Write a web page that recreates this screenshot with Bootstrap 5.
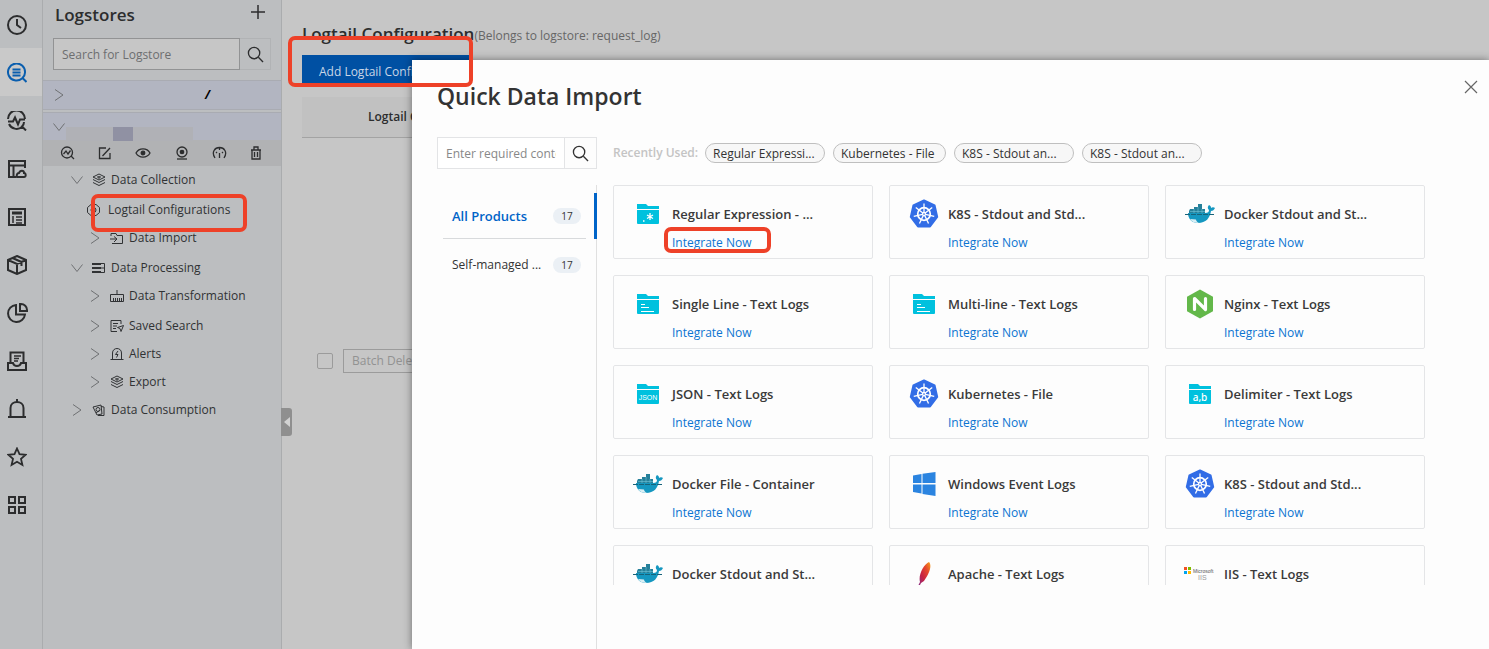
<!DOCTYPE html>
<html lang="en">
<head>
<meta charset="utf-8">
<meta name="viewport" content="width=device-width, initial-scale=1">
<title>Logstores - Quick Data Import</title>
<link href="https://cdn.jsdelivr.net/npm/bootstrap@5.3.0/dist/css/bootstrap.min.css" rel="stylesheet">
<style>
  :root { --ink:#2c2d2e; --line:#aaacae; --mark:#ee4128; --blue:#0064c8; }
  body { font-family:"Open Sans","Noto Sans",sans-serif; font-size:12px; line-height:16px; color:var(--ink); background:#c6c6c6; }
  a { text-decoration:none; color:inherit; }
  svg { display:block; flex:none; }
  .ico { fill:none; stroke:currentColor; stroke-width:2; }
  .fine { stroke-width:1; }
  .mark-box { position:absolute; border:4px solid var(--mark); border-radius:7px; z-index:30; pointer-events:none; }
  /* icon rail */
  .rail { width:43px; background:#bcbec0; border-right:1px solid var(--line); }
  .rail a { height:48px; padding:1px 0 0 7px; display:flex; align-items:center; }
  .rail a.active { background:#c9c9c9; color:#0a5eae; }
  /* logstore tree */
  .stores { width:239px; background:#bcbec0; border-right:1px solid var(--line); }
  .stores h1 { font-size:17px; line-height:24px; font-weight:600; }
  .stores-head { padding:3px 16px 0 12px; }
  .stores-find { padding:11px 10px 10px; }
  .plain { border:0; background:none; padding:0; color:inherit; }
  .field, .field:focus { font-size:12px; line-height:16px; border-radius:0; box-shadow:none; padding:0 8px; min-height:0; }
  .stores .field { height:32px; background:#c6c6c6; border-color:#929394; }
  .stores .field::placeholder { color:#6d6e70; }
  .stores .find { width:31px; border:1px solid #b1b3b5; border-left:0; }
  .store { background:#b2b5c1; border:1px solid #a9abb2; border-width:1px 0; height:30px; padding-left:10px; gap:1px; color:#6f7173; }
  .store.open { margin-top:2px; border-bottom:0; height:28px; }
  .veil { width:134px; height:28px; }
  .veil i { height:14px; width:20px; background:#b0b1b6; }
  .veil i.edge { width:7px; }
  .veil i.deep { background:#9091a3; }
  .tools { background:#b1b2b4; height:26px; padding:0 19px 0 17px; }
  .tree-row { height:28px; display:flex; align-items:center; gap:5px; color:#303234; }
  .tree-row .chev { color:#6f7173; }
  .tree-row .kind { margin-left:4px; }
  .lvl1 { padding-left:28px; }
  .lvl2 { padding-left:46px; }
  .step { margin-top:2px; }
  .leaf { padding-left:44px; position:relative; gap:8px; }
  .leaf .mark-box { left:48px; top:-2px; width:156px; height:38px; }
  .fold { position:absolute; left:100%; top:408px; width:11px; height:28px; background:#8f8f8f; color:#d2d2d2; border-radius:0 3px 3px 0; display:flex; align-items:center; justify-content:center; }
  /* page behind the drawer */
  .page { padding:22px 20px 0; }
  .page h2 { font-size:17px; line-height:24px; font-weight:600; }
  .add-btn { background:#0050a3; color:#c9d6e6; border:0; border-radius:0; width:168px; height:32px; font-size:12px; padding:1px 0 0 17px; text-align:left; }
  .add-wrap { position:relative; width:168px; margin-top:9px; }
  .add-wrap .mark-box { left:-14px; top:-19px; width:185px; height:51px; }
  .conf { width:100%; margin-top:10px; }
  .conf th { background:#c1c1c1; height:40px; border-bottom:1px solid #a3a3a3; font-weight:600; padding-left:66px; }
  .batch { margin-top:211px; padding-left:15px; gap:10px; }
  .batch .form-check-input { width:16px; height:16px; border-radius:2px; margin:0; background-color:transparent; border-color:#9b9b9b; }
  .batch .btn { font-size:12px; line-height:16px; border:1px solid #9b9b9b; border-radius:0; color:#929292; padding:3px 8px; opacity:1; }
  /* drawer */
  .drawer { position:absolute; top:60px; right:0; bottom:0; left:412px; background:#fdfdfd; color:#333; padding:0 64px 0 25px; box-shadow:0 0 8px rgba(0,0,0,.45); z-index:10; }
  .drawer h2 { font-size:23px; line-height:32px; font-weight:600; padding-top:20px; margin-bottom:25px; }
  .close-x { position:absolute; top:20px; right:11px; color:#666; }
  .seek { width:160px; }
  .seek .field { height:32px; border-color:#e3e4e6; background:#fff; color:#888; }
  .seek .field::placeholder { color:#888; }
  .seek .find { width:32px; border:1px solid #e3e4e6; border-left:0; }
  .recent { color:#c4c4c4; font-weight:600; width:84px; white-space:nowrap; }
  .pill { height:20px; border:1px solid #bfbfbf; border-radius:10px; background:#f7f7f7; padding:2px 7px; width:120px; white-space:nowrap; overflow:hidden; color:#333; line-height:16px; }
  .pill.short { width:113px; }
  .kinds { width:160px; border-right:1px solid #e0e0e0; padding-top:8px; }
  .kinds a { position:relative; height:46px; padding-right:15px; padding-left:15px; display:flex; align-items:center; justify-content:space-between; }
  .kinds a.on { font-size:13px; font-weight:600; color:var(--blue); margin-right:-1px; border-right:3px solid var(--blue); padding-right:13px; }
  .kinds hr { margin:-1px 10px 3px 6px; border-color:#d8dadc; opacity:1; }
  .count { width:28px; height:16px; border-radius:8px; background:#ebf0f5; color:#333; font-size:10px; font-weight:500; text-align:center; }
  .tiles { display:grid; grid-template-columns:repeat(3,minmax(0,1fr)); grid-auto-rows:74px; gap:16px; overflow:hidden; margin-bottom:64px; }
  .tile { border:1px solid #e4e5e7; border-radius:2px; padding:18px 12px 0 10px; display:flex; }
  .logo { width:48px; height:20px; display:flex; align-items:center; justify-content:center; flex:none; }
  .tile h3 { font-size:13px; line-height:20px; font-weight:600; margin-bottom:11px; white-space:nowrap; color:#3a3a3a; }
  .tile a { color:#0b74d1; position:relative; display:inline-block; }
  .tile .mark-box { left:-8px; top:-8px; width:107px; height:26px; }
</style>
</head>
<body>
<svg width="0" height="0" class="position-absolute" aria-hidden="true">
  <symbol id="right" viewBox="0 0 12 14"><path class="ico fine" d="M2 1.500l8 5.500-8 5.500"/></symbol>
  <symbol id="down" viewBox="0 0 12 14"><path class="ico fine" d="M.5 3.500L6 10.500l5.500-7"/></symbol>
  <symbol id="glass" viewBox="0 0 18 18"><circle class="ico" style="stroke-width:1.4" cx="7.500" cy="7.500" r="6"/><path class="ico" style="stroke-width:1.4" d="M12 12l5 5"/></symbol>
  <symbol id="folder" viewBox="0 0 24 22"><path fill="#00c1de" d="M1 1h9l2 2h11v3H1zM1 7h22v13a1 1 0 0 1-1 1H2a1 1 0 0 1-1-1z"/></symbol>
  <symbol id="lines" viewBox="0 0 24 22"><use href="#folder"/><path stroke="#fff" fill="none" d="M5 11.500h4M5 14.500h8M5 18.500h13"/></symbol>
  <symbol id="k8s" viewBox="0 0 30 30">
    <path fill="#326de6" stroke="#326de6" stroke-width="2" stroke-linejoin="round" d="M15 1.500L25.600 6.500 28.200 18 21 27.500H9L1.800 18 4.400 6.500z"/>
    <g fill="none" stroke="#fff" stroke-width="1.300"><circle cx="15" cy="15" r="6.300" stroke-width="1.700"/><circle cx="15" cy="15" r="1.500"/>
    <path d="M15 13.500V4.500"/><path d="M15 13.500V4.500" transform="rotate(51.400 15 15)"/><path d="M15 13.500V4.500" transform="rotate(102.900 15 15)"/><path d="M15 13.500V4.500" transform="rotate(154.300 15 15)"/><path d="M15 13.500V4.500" transform="rotate(205.700 15 15)"/><path d="M15 13.500V4.500" transform="rotate(257.100 15 15)"/><path d="M15 13.500V4.500" transform="rotate(308.600 15 15)"/></g>
  </symbol>
  <symbol id="docker" viewBox="0 0 32 22">
    <path fill="#25809a" d="M6 6h4V4h4V1h4v5h3v5H5V8z"/><path stroke="#6fc3d8" stroke-width=".6" d="M10 6v5M14 4v7M18 6v5M6 8.500h15"/>
    <path fill="#1597c0" d="M4 10h17c3 0 4-1 4-3-2-2-1-4 0-5 2 1 2 2 2 3 1-1 3-1 4 0-1 2-2 3-4 3-1 7-5 12-13 12C8 20 4 16 4 10z"/>
    <path stroke="#17637a" d="M1 11.500h29" stroke-dasharray="5 1"/><path fill="#d9eff5" d="M6 16l6 .5c0 2 2 3 3 3.500-4 0-7-1-9-4z"/>
  </symbol>
  <symbol id="stack" viewBox="0 0 14 14"><path class="ico fine" d="M7 1l6 3-6 3-6-3zM1 6.500l6 3 6-3M1 9.500l6 3 6-3M5 4h4M7 3v3"/></symbol>
</svg>

<div class="d-flex vh-100 overflow-hidden position-relative">
  <nav class="rail flex-shrink-0" aria-label="Sections">
    <a href="#" aria-label="History"><svg width="20" height="20" viewBox="0 0 20 20" class="ico"><circle cx="10" cy="10" r="9"/><path d="M10 4v6l4 3"/></svg></a>
    <a href="#" class="active" aria-label="Log storage"><svg width="20" height="20" viewBox="0 0 20 20" class="ico"><path d="M15 15.500A8.500 8.500 0 1 1 18 9.500c0 2-1 4-2.500 5.500l4 4"/><path d="M5.500 6.500h8M5.500 9.500h8M5.500 12.500h8"/></svg></a>
    <a href="#" aria-label="Metrics"><svg width="20" height="20" viewBox="0 0 20 20" class="ico"><path d="M1 8a8.500 8.500 0 0 1 17 0M2 13a8.500 8.500 0 0 0 13 3M17 11c0 2-1 3.500-2 4.500l4 4M1 10.500h5l2-4 3 7 2-5h5"/></svg></a>
    <a href="#" aria-label="Dashboards"><svg width="20" height="20" viewBox="0 0 20 20" class="ico"><path d="M18 9V2H2v16h7M2 6.500h16M6.500 7v11M10 18c-1-3 1-4 2-4 1-3 5-3 5 0 2 0 2.500 4 0 4z"/></svg></a>
    <a href="#" aria-label="Reports"><svg width="20" height="20" viewBox="0 0 20 20" class="ico"><path d="M2 2h16v16H2z"/><path d="M5 6h10" stroke-width="3"/><path d="M6 9v7M9 10h6M9 13h6M9 16h6" stroke-width="1.500"/></svg></a>
    <a href="#" aria-label="Resources"><svg width="20" height="20" viewBox="0 0 20 20" class="ico"><path d="M10 1l9 4v10l-9 4-9-4V5zM1 5l9 4 9-4M10 9v10M5.500 3l9 4v4"/></svg></a>
    <a href="#" aria-label="Charts"><svg width="22" height="20" viewBox="0 0 22 20" class="ico"><path d="M9 2a8.500 8.500 0 1 0 9 9.500H9zM13 1h1a6 6 0 0 1 6 6v1h-7z"/></svg></a>
    <a href="#" aria-label="Inbox"><svg width="20" height="20" viewBox="0 0 20 20" class="ico"><path d="M3.500 12V1.500h13V12M1 12h5c1 4 7 4 8 0h5v7H1z"/><path d="M7 5h7M7 7.500h5M7 10h4" stroke-width="1.500"/></svg></a>
    <a href="#" aria-label="Alerts"><svg width="20" height="20" viewBox="0 0 20 20" class="ico"><path d="M1 18h18M3.500 18V9c0-8 13-8 13 0v9M10 0v3"/></svg></a>
    <a href="#" aria-label="Favorites"><svg width="20" height="20" viewBox="0 0 20 20" class="ico"><path stroke-width="1.800" d="M10 1.500l2.500 5.700 6.200.6-4.700 4.100 1.400 6.100L10 14.800 4.600 18 6 11.900 1.300 7.800l6.200-.6z"/></svg></a>
    <a href="#" aria-label="All apps"><svg width="20" height="20" viewBox="0 0 20 20" class="ico"><path d="M2 2h6v6H2zM12 2h6v6h-6zM2 12h6v6H2zM12 12h6v6h-6z"/></svg></a>
  </nav>

  <aside class="stores flex-shrink-0 position-relative">
    <div class="stores-head d-flex justify-content-between align-items-start">
      <h1 class="m-0">Logstores</h1>
      <button class="plain" aria-label="Add logstore"><svg width="14" height="16" viewBox="0 0 14 16" class="ico" style="stroke-width:1.500"><path d="M7 2v14M0 9h14"/></svg></button>
    </div>
    <div class="stores-find d-flex">
      <input class="form-control field" type="text" placeholder="Search for Logstore" aria-label="Search for Logstore">
      <button class="plain find d-flex flex-shrink-0 align-items-center justify-content-center" aria-label="Search"><svg width="17" height="17"><use href="#glass"/></svg></button>
    </div>
    <div class="store d-flex align-items-center"><svg width="12" height="14"><use href="#right"/></svg><span class="veil"></span><b class="ps-1 text-black"><i>/</i></b></div>
    <div class="store open d-flex align-items-center"><svg width="12" height="14"><use href="#down"/></svg><span class="veil d-flex align-items-end"><i class="edge"></i><i></i><i></i><i class="deep"></i><i></i><i></i><i></i></span></div>
    <div class="tools d-flex align-items-center justify-content-between">
      <button class="plain" aria-label="Query"><svg width="15" height="14" viewBox="0 0 15 14" class="ico" style="stroke-width:1.300"><circle cx="7" cy="6.500" r="5.500"/><path d="M3.500 8l2.500-3 2 3 2.500-3.500M11 10l3 3"/></svg></button>
      <button class="plain" aria-label="Modify"><svg width="14" height="14" viewBox="0 0 14 14" class="ico" style="stroke-width:1.300"><path d="M8 2H1.500v10.500H12V7M4.500 10L12 2"/></svg></button>
      <button class="plain" aria-label="View"><svg width="16" height="14" viewBox="0 0 16 14" class="ico" style="stroke-width:1.300"><path d="M1 7c3-5.500 11-5.500 14 0-3 5.500-11 5.500-14 0z"/><circle cx="8" cy="7" r="1.800" fill="currentColor"/></svg></button>
      <button class="plain" aria-label="Monitor"><svg width="14" height="14" viewBox="0 0 14 14" class="ico" style="stroke-width:1.300"><circle cx="7" cy="6" r="5"/><circle cx="7" cy="6" r="1.700" fill="currentColor"/><path d="M2 13h10"/></svg></button>
      <button class="plain" aria-label="Usage"><svg width="15" height="14" viewBox="0 0 15 14" class="ico" style="stroke-width:1.300"><path d="M3 12C-1 6 3 1.500 7.500 1.500S16 6 12 12M7.500 7v5M7.500 2v2M4 6l1 1M11 6l-1 1"/></svg></button>
      <button class="plain" aria-label="Delete"><svg width="12" height="14" viewBox="0 0 12 14" class="ico" style="stroke-width:1.300"><path d="M1 4h10M2 4v9h8V4M4 3.500V1h4v2.500M4.500 6v5M7.500 6v5"/></svg></button>
    </div>
    <div>
      <a href="#" class="tree-row lvl1"><svg class="chev" width="12" height="14"><use href="#down"/></svg><svg class="kind" width="14" height="14"><use href="#stack"/></svg>Data Collection</a>
      <a href="#" class="tree-row leaf step"><svg width="13" height="14" viewBox="0 0 13 14" class="ico fine"><path d="M4 1.500h5l3.500 3v5L9 12.500H4L.5 9.500v-5z"/><circle cx="6.500" cy="7" r="2.500"/></svg>Logtail Configurations<span class="mark-box"></span></a>
      <a href="#" class="tree-row lvl2"><svg class="chev" width="12" height="14"><use href="#right"/></svg><svg class="kind" width="14" height="14" viewBox="0 0 14 14"><path class="ico fine" d="M1 5V2.500h5l1 2h5.500v8H2M0 8h6M4 5.500L7 8l-3 3"/></svg>Data Import</a>
      <a href="#" class="tree-row lvl1 step"><svg class="chev" width="12" height="14"><use href="#down"/></svg><svg class="kind" width="14" height="14" viewBox="0 0 14 14"><path class="ico" d="M0 3h9M0 7h9M0 11h9"/><path class="ico fine" d="M9 2.500h3.500v9H9M9 7h3"/></svg>Data Processing</a>
      <a href="#" class="tree-row lvl2"><svg class="chev" width="12" height="14"><use href="#right"/></svg><svg class="kind" width="14" height="14" viewBox="0 0 14 14"><path class="ico fine" d="M.5 5.500h13v7H.5zM7 1v4M3.500 12V9M5.500 12V9M7.500 12V9M9.500 12V9M11.500 12V9"/></svg>Data Transformation</a>
      <a href="#" class="tree-row lvl2 step"><svg class="chev" width="12" height="14"><use href="#right"/></svg><svg class="kind" width="14" height="14" viewBox="0 0 14 14"><path class="ico fine" d="M11 5V1.500H1v11h6M3 4.500h5M3 7h4M3 9.500h3M7.500 8.500l6-2-2.500 6-1-3z"/></svg>Saved Search</a>
      <a href="#" class="tree-row lvl2"><svg class="chev" width="12" height="14"><use href="#right"/></svg><svg class="kind" width="14" height="14" viewBox="0 0 14 14"><path class="ico fine" d="M.5 12.500h13M2.500 12.500V6c0-6 9-6 9 0v6.500M8 4L5.500 7.500H8L6.500 10.500"/></svg>Alerts</a>
      <a href="#" class="tree-row lvl2"><svg class="chev" width="12" height="14"><use href="#right"/></svg><svg class="kind" width="14" height="14"><use href="#stack"/></svg>Export</a>
      <a href="#" class="tree-row lvl1"><svg class="chev" width="12" height="14"><use href="#right"/></svg><svg class="kind" width="14" height="14" viewBox="0 0 14 14"><path class="ico fine" d="M1 4l8-2 1 9-5 1zM9 3.500l3 .5v8.500H6"/><circle class="ico fine" cx="6" cy="6.500" r="2"/><path class="ico fine" d="M4 10l4-3"/></svg>Data Consumption</a>
    </div>
    <button class="plain fold" aria-label="Collapse"><svg width="6" height="10"><path fill="currentColor" d="M6 0v10L0 5z"/></svg></button>
  </aside>

  <main class="page flex-grow-1">
    <div class="d-flex align-items-baseline"><h2 class="m-0">Logtail Configuration</h2><span style="color:#666">(Belongs to logstore: request_log)</span></div>
    <div class="add-wrap"><button class="btn add-btn">Add Logtail Configuration</button><span class="mark-box"></span></div>
    <table class="conf"><thead><tr><th scope="col">Logtail Configuration</th></tr></thead></table>
    <div class="batch d-flex align-items-center">
      <input class="form-check-input" type="checkbox" id="all" aria-label="Select all">
      <button class="btn" disabled>Batch Delete</button>
    </div>
  </main>

  <section class="drawer d-flex flex-column" aria-label="Quick Data Import">
    <h2>Quick Data Import</h2>
    <button class="plain close-x" aria-label="Close"><svg width="14" height="14" viewBox="0 0 14 14" class="ico" style="stroke-width:1.200"><path d="M1 1l12 12M13 1L1 13"/></svg></button>
    <div class="d-flex align-items-center gap-3 mb-3">
      <div class="d-flex seek flex-shrink-0">
        <input class="form-control field" type="text" placeholder="Enter required content" aria-label="Enter required content">
        <button class="plain find d-flex flex-shrink-0 align-items-center justify-content-center" aria-label="Search"><svg width="17" height="17"><use href="#glass"/></svg></button>
      </div>
      <div class="d-flex align-items-center gap-2">
        <span class="recent">Recently Used:</span>
        <a href="#" class="pill">Regular Expressi...</a>
        <a href="#" class="pill short">Kubernetes - File</a>
        <a href="#" class="pill">K8S - Stdout an...</a>
        <a href="#" class="pill">K8S - Stdout an...</a>
      </div>
    </div>
    <div class="d-flex flex-grow-1 gap-3" style="min-height:0">
      <nav class="kinds flex-shrink-0" aria-label="Product types">
        <a href="#" class="on">All Products<span class="count">17</span></a>
        <hr>
        <a href="#">Self-managed ...<span class="count">17</span></a>
      </nav>
      <div class="tiles flex-grow-1">
        <article class="tile"><span class="logo"><svg width="24" height="22" viewBox="0 0 24 22"><use href="#folder"/><path stroke="#fff" stroke-width="1.300" d="M14 10v7M11 12l6 3.500M17 12l-6 3.500M7 18h1.500"/></svg></span><div><h3>Regular Expression - ...</h3><a href="#">Integrate Now<span class="mark-box"></span></a></div></article>
        <article class="tile"><span class="logo"><svg width="30" height="30"><use href="#k8s"/></svg></span><div><h3>K8S - Stdout and Std...</h3><a href="#">Integrate Now</a></div></article>
        <article class="tile"><span class="logo"><svg width="32" height="22"><use href="#docker"/></svg></span><div><h3>Docker Stdout and St...</h3><a href="#">Integrate Now</a></div></article>
        <article class="tile"><span class="logo"><svg width="24" height="22"><use href="#lines"/></svg></span><div><h3>Single Line - Text Logs</h3><a href="#">Integrate Now</a></div></article>
        <article class="tile"><span class="logo"><svg width="24" height="22"><use href="#lines"/></svg></span><div><h3>Multi-line - Text Logs</h3><a href="#">Integrate Now</a></div></article>
        <article class="tile"><span class="logo"><svg width="28" height="30" viewBox="0 0 28 30"><path fill="#63b84a" d="M14 .5l13 7.300v14.400L14 29.500 1 22.200V7.800z"/><path fill="none" stroke="#fff" stroke-width="3.200" stroke-linecap="round" stroke-linejoin="round" d="M8.500 20.500v-11l11 11v-11"/></svg></span><div><h3>Nginx - Text Logs</h3><a href="#">Integrate Now</a></div></article>
        <article class="tile"><span class="logo"><svg width="24" height="22" viewBox="0 0 24 22"><use href="#folder"/><text x="12" y="17" text-anchor="middle" font-size="7" fill="#fff" font-family="Liberation Sans, sans-serif">JSON</text></svg></span><div><h3>JSON - Text Logs</h3><a href="#">Integrate Now</a></div></article>
        <article class="tile"><span class="logo"><svg width="30" height="30"><use href="#k8s"/></svg></span><div><h3>Kubernetes - File</h3><a href="#">Integrate Now</a></div></article>
        <article class="tile"><span class="logo"><svg width="24" height="22" viewBox="0 0 24 22"><use href="#folder"/><text x="12" y="18" text-anchor="middle" font-size="10" fill="#fff" font-family="Noto Sans, sans-serif" font-weight="500">a,b</text></svg></span><div><h3>Delimiter - Text Logs</h3><a href="#">Integrate Now</a></div></article>
        <article class="tile"><span class="logo"><svg width="32" height="22"><use href="#docker"/></svg></span><div><h3>Docker File - Container</h3><a href="#">Integrate Now</a></div></article>
        <article class="tile"><span class="logo"><svg width="24" height="26" viewBox="0 0 24 26"><path fill="#2b84e0" d="M1 4.500l8.500-1.500v9H1zM10.500 2.800L23.500 1v11h-13zM1 13.500h8.500v9L1 21zM10.500 13.500h13v11.500l-13-2z"/></svg></span><div><h3>Windows Event Logs</h3><a href="#">Integrate Now</a></div></article>
        <article class="tile"><span class="logo"><svg width="30" height="30"><use href="#k8s"/></svg></span><div><h3>K8S - Stdout and Std...</h3><a href="#">Integrate Now</a></div></article>
        <article class="tile"><span class="logo"><svg width="32" height="22"><use href="#docker"/></svg></span><div><h3>Docker Stdout and St...</h3><a href="#">Integrate Now</a></div></article>
        <article class="tile"><span class="logo"><svg width="14" height="28" viewBox="0 0 14 28"><defs><linearGradient id="fe" x1="1" y1="0" x2="0" y2="1"><stop offset="0" stop-color="#f6a21c"/><stop offset=".3" stop-color="#e6482c"/><stop offset=".6" stop-color="#c82342"/><stop offset="1" stop-color="#7e2a8d"/></linearGradient></defs><path fill="url(#fe)" d="M12 2c3 3 1 11-5 19l-3 2-2 4-1-1 2-4C1 15 7 4 12 2z"/></svg></span><div><h3>Apache - Text Logs</h3><a href="#">Integrate Now</a></div></article>
        <article class="tile"><span class="logo"><svg width="34" height="16" viewBox="0 0 34 16"><path fill="#f25022" d="M1 1h3v3H1z"/><path fill="#7fba00" d="M5 1h3v3H5z"/><path fill="#00a4ef" d="M1 5h3v3H1z"/><path fill="#ffb900" d="M5 5h3v3H5z"/><text x="10" y="7" font-size="5" fill="#555" font-family="Liberation Sans, sans-serif">Microsoft</text><text x="15" y="14" font-size="7" fill="#999" font-family="Liberation Sans, sans-serif">IIS</text></svg></span><div><h3>IIS - Text Logs</h3><a href="#">Integrate Now</a></div></article>
      </div>
    </div>
  </section>
</div>
<script src="https://cdn.jsdelivr.net/npm/bootstrap@5.3.0/dist/js/bootstrap.bundle.min.js"></script>
</body>
</html>
